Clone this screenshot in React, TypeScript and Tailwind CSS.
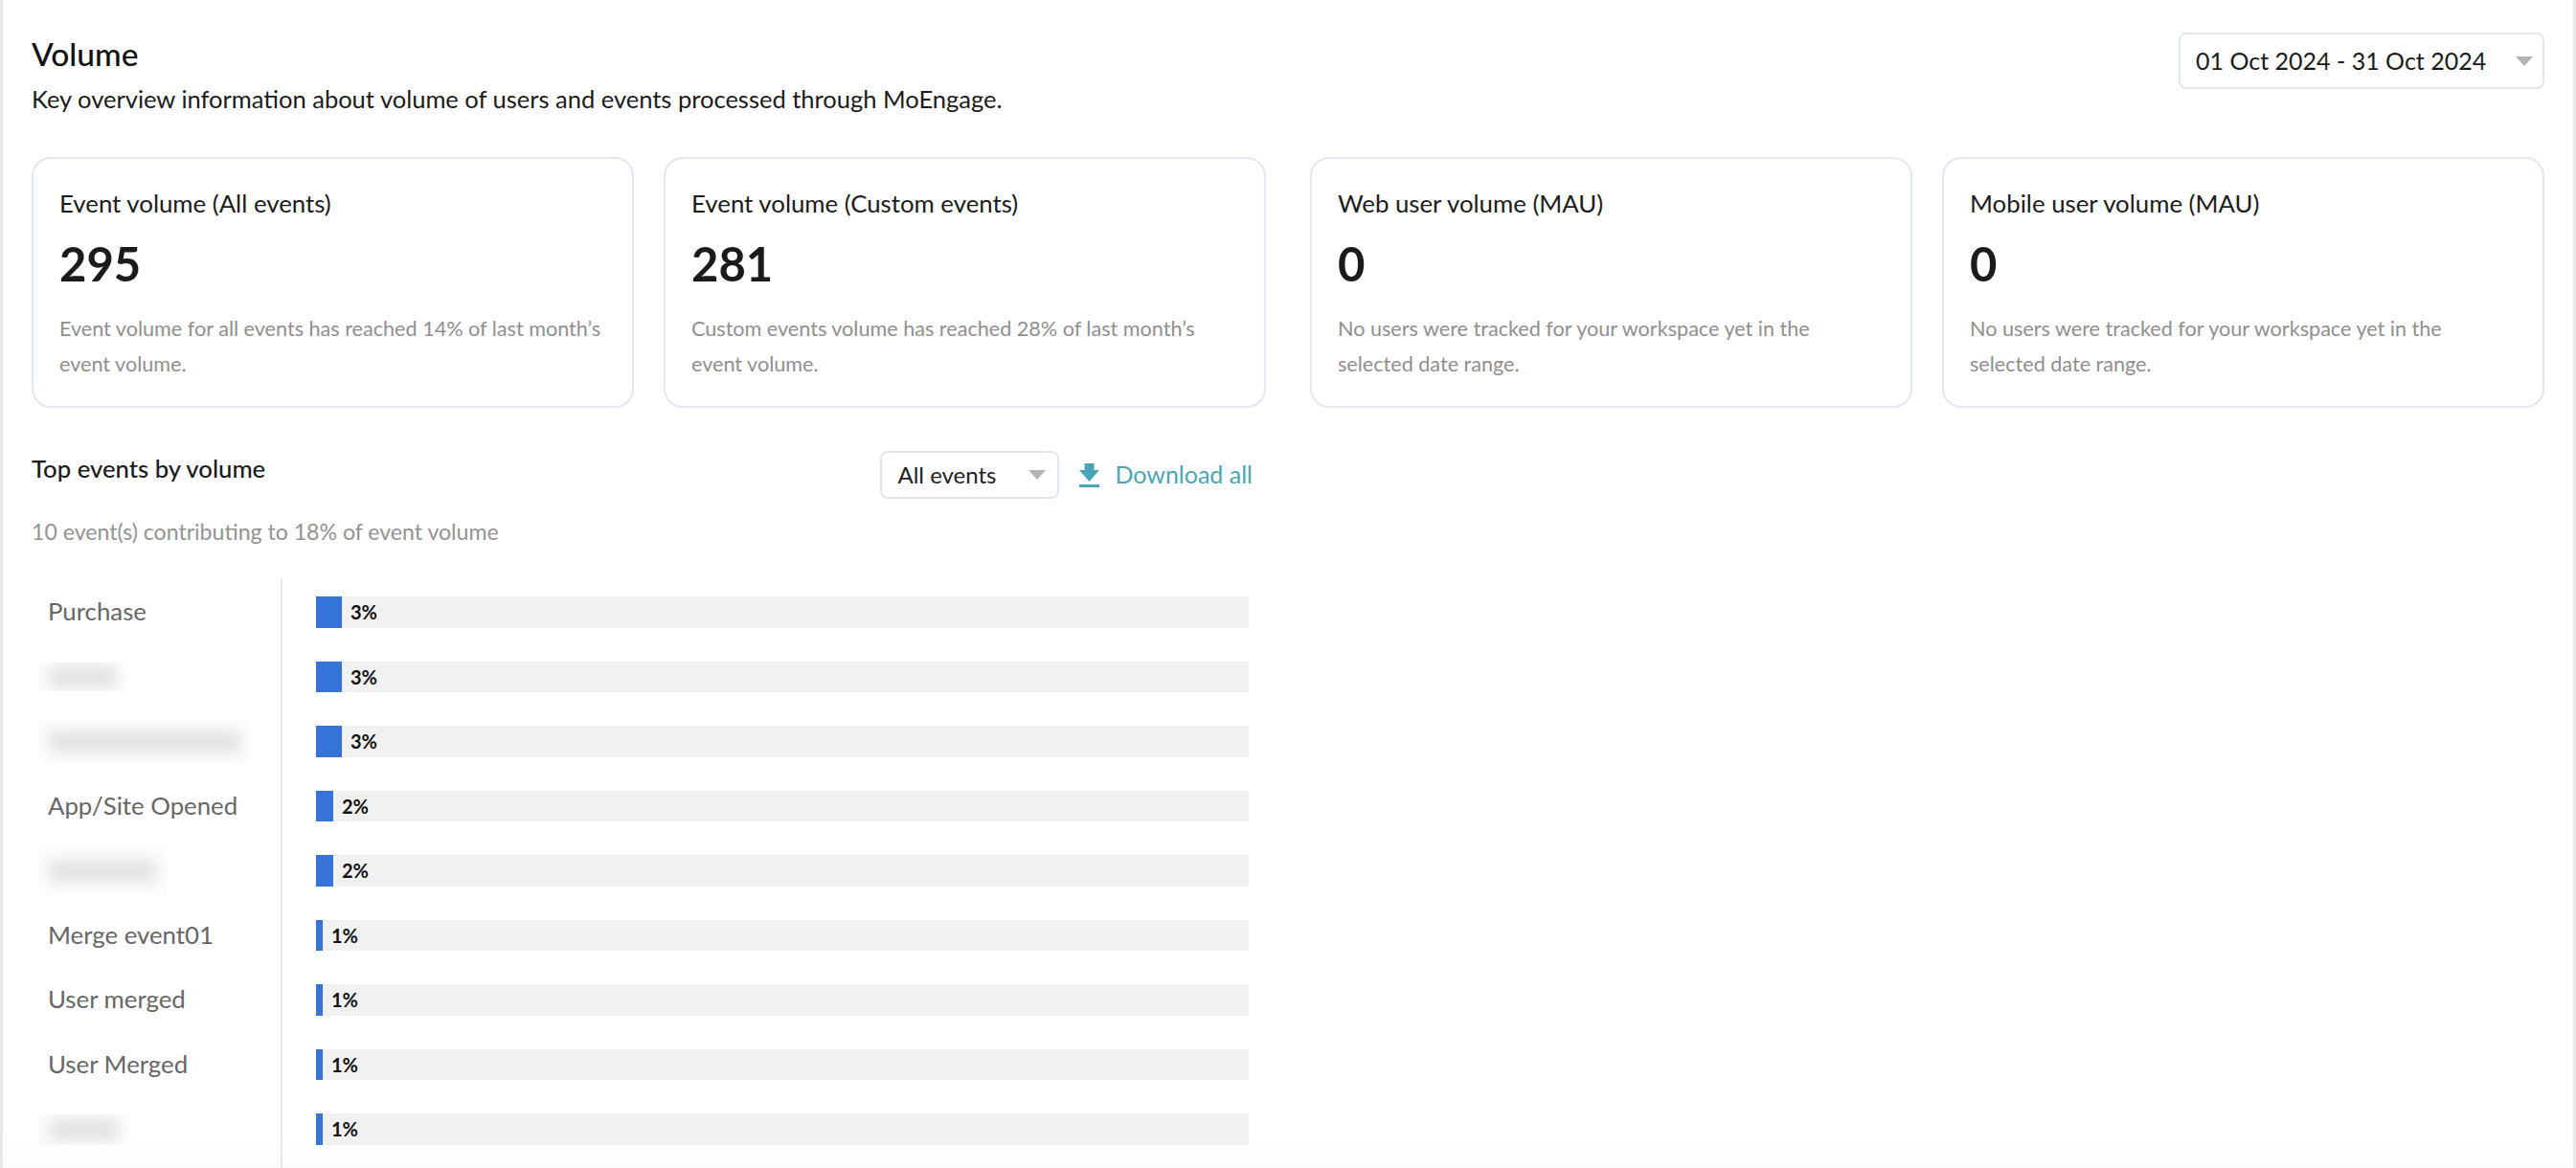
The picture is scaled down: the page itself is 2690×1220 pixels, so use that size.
const stats = [
  { title: 'Event volume (All events)', value: '295', desc: ['Event volume for all events has reached 14% of last month’s', 'event volume.'] },
  { title: 'Event volume (Custom events)', value: '281', desc: ['Custom events volume has reached 28% of last month’s', 'event volume.'] },
  { title: 'Web user volume (MAU)', value: '0', desc: ['No users were tracked for your workspace yet in the', 'selected date range.'] },
  { title: 'Mobile user volume (MAU)', value: '0', desc: ['No users were tracked for your workspace yet in the', 'selected date range.'] },
];

// blurred rows: the names are hidden in the picture, boxW/boxH is the smudged patch
const events = [
  { label: 'Purchase', pct: 3, width: 27 },
  { boxW: 92, boxH: 30, pct: 3, width: 27 },
  { boxW: 222, boxH: 46, pct: 3, width: 27 },
  { label: 'App/Site Opened', pct: 2, width: 18 },
  { boxW: 134, boxH: 52, pct: 2, width: 18 },
  { label: 'Merge event01', pct: 1, width: 7 },
  { label: 'User merged', pct: 1, width: 7 },
  { label: 'User Merged', pct: 1, width: 7 },
  { boxW: 94, boxH: 32, pct: 1, width: 7 },
];

function Caret() {
  return (
    <svg width="18" height="10" viewBox="0 0 18 10" className="shrink-0">
      <path d="M0 0h18L9 10z" fill="#b3b3b3" />
    </svg>
  );
}

function StatCard({ title, value, desc }: { title: string; value: string; desc: string[] }) {
  return (
    <div className="w-[629px] h-[262px] rounded-[20px] border-2 border-[#e3e7f1] pt-[28px] pl-[27px]">
      <div className="text-[25.8px] leading-[36px] text-[#1b1b1b]">{title}</div>
      <div className="mt-[15px] text-[49px] leading-[60px] font-bold text-[#1b1b1b]">{value}</div>
      <div className="mt-[20px] text-[21.6px] leading-[36.5px] text-[#8f8f8f]">
        {desc.map((line) => (
          <div key={line}>{line}</div>
        ))}
      </div>
    </div>
  );
}

export default function App() {
  return (
    <div className="w-[2690px] h-[1220px] overflow-hidden bg-linear-to-b from-white from-[97%] to-[#fcfcfc] border-x-[3px] border-[#e8e8e8] pl-[30px] pr-[30px] font-['Lato',sans-serif]">
      <header className="flex justify-between items-start pt-[34px]">
        <div>
          <h1 className="text-[33.5px] leading-[44px] font-medium text-[#111]">Volume</h1>
          <p className="mt-[7px] text-[25.5px] leading-[36px] text-[#1b1b1b]">
            Key overview information about volume of users and events processed through MoEngage.
          </p>
        </div>
        <div className="flex items-center justify-between w-[382px] h-[59px] rounded-[8px] border-2 border-[#e3e7f1] pl-[16px] pr-[10px]">
          <span className="text-[25px] text-[#1b1b1b]">01 Oct 2024 - 31 Oct 2024</span>
          <Caret />
        </div>
      </header>

      <div className="flex mt-[43px]">
        <div className="flex gap-[31px]">
          <StatCard {...stats[0]} />
          <StatCard {...stats[1]} />
        </div>
        <div className="flex gap-[31px] ml-[46px]">
          <StatCard {...stats[2]} />
          <StatCard {...stats[3]} />
        </div>
      </div>

      <section className="w-[1275px] mt-[45px]">
        <div className="flex justify-between items-start">
          <h2 className="text-[25.7px] leading-[36px] font-medium text-[#1b1b1b]">Top events by volume</h2>
          <div className="flex items-center gap-[21px]">
            <div className="flex items-center justify-between w-[187px] h-[50px] rounded-[8px] border-2 border-[#e3e7f1] pl-[16px] pr-[12px]">
              <span className="text-[24px] text-[#222]">All events</span>
              <Caret />
            </div>
            <div className="flex items-center gap-[16px] text-[#4aa5b7]">
              <svg width="21" height="25" viewBox="0 0 21 25">
                <path d="M5.5 0h10v7H21L10.5 19 0 7h5.5zM0 22h21v3H0z" fill="currentColor" />
              </svg>
              <span className="text-[25px]">Download all</span>
            </div>
          </div>
        </div>
        <p className="mt-[16px] text-[23.1px] leading-[36px] text-[#939393]">10 event(s) contributing to 18% of event volume</p>

        <div className="mt-[32px] flex pr-[4px]">
          <div className="w-[262px] shrink-0 pt-[18px] border-r-2 border-[#e3e7f1]">
            {events.map((e, i) => (
              <div key={i} className="h-[67.5px] pl-[17px] text-[25.8px] text-[#666666]">
                {e.label ? (
                  <div className="h-[33px] leading-[31px] whitespace-nowrap">{e.label}</div>
                ) : (
                  <div className="h-[33px] flex items-center">
                    <div
                      className="-ml-[10px] shrink-0 overflow-hidden flex items-center justify-center bg-[#fdfdfd]"
                      style={{ width: e.boxW, height: e.boxH }}
                    >
                      <div className="bg-[#e0e0e0] blur-[8px]" style={{ width: (e.boxW ?? 0) - 22, height: 22 }} />
                    </div>
                  </div>
                )}
              </div>
            ))}
          </div>
          <div className="flex-1 pl-[35px] pt-[18px]">
            {events.map((e, i) => (
              <div key={i} className="h-[67.5px]">
                <div className="flex items-center h-[32.5px] bg-[#f1f1f1]">
                  <div className="h-full bg-[#3673d8]" style={{ width: e.width }} />
                  <span className="ml-[9px] text-[20px] leading-[30px] font-bold text-[#111]">{e.pct}%</span>
                </div>
              </div>
            ))}
          </div>
        </div>
      </section>
    </div>
  );
}
